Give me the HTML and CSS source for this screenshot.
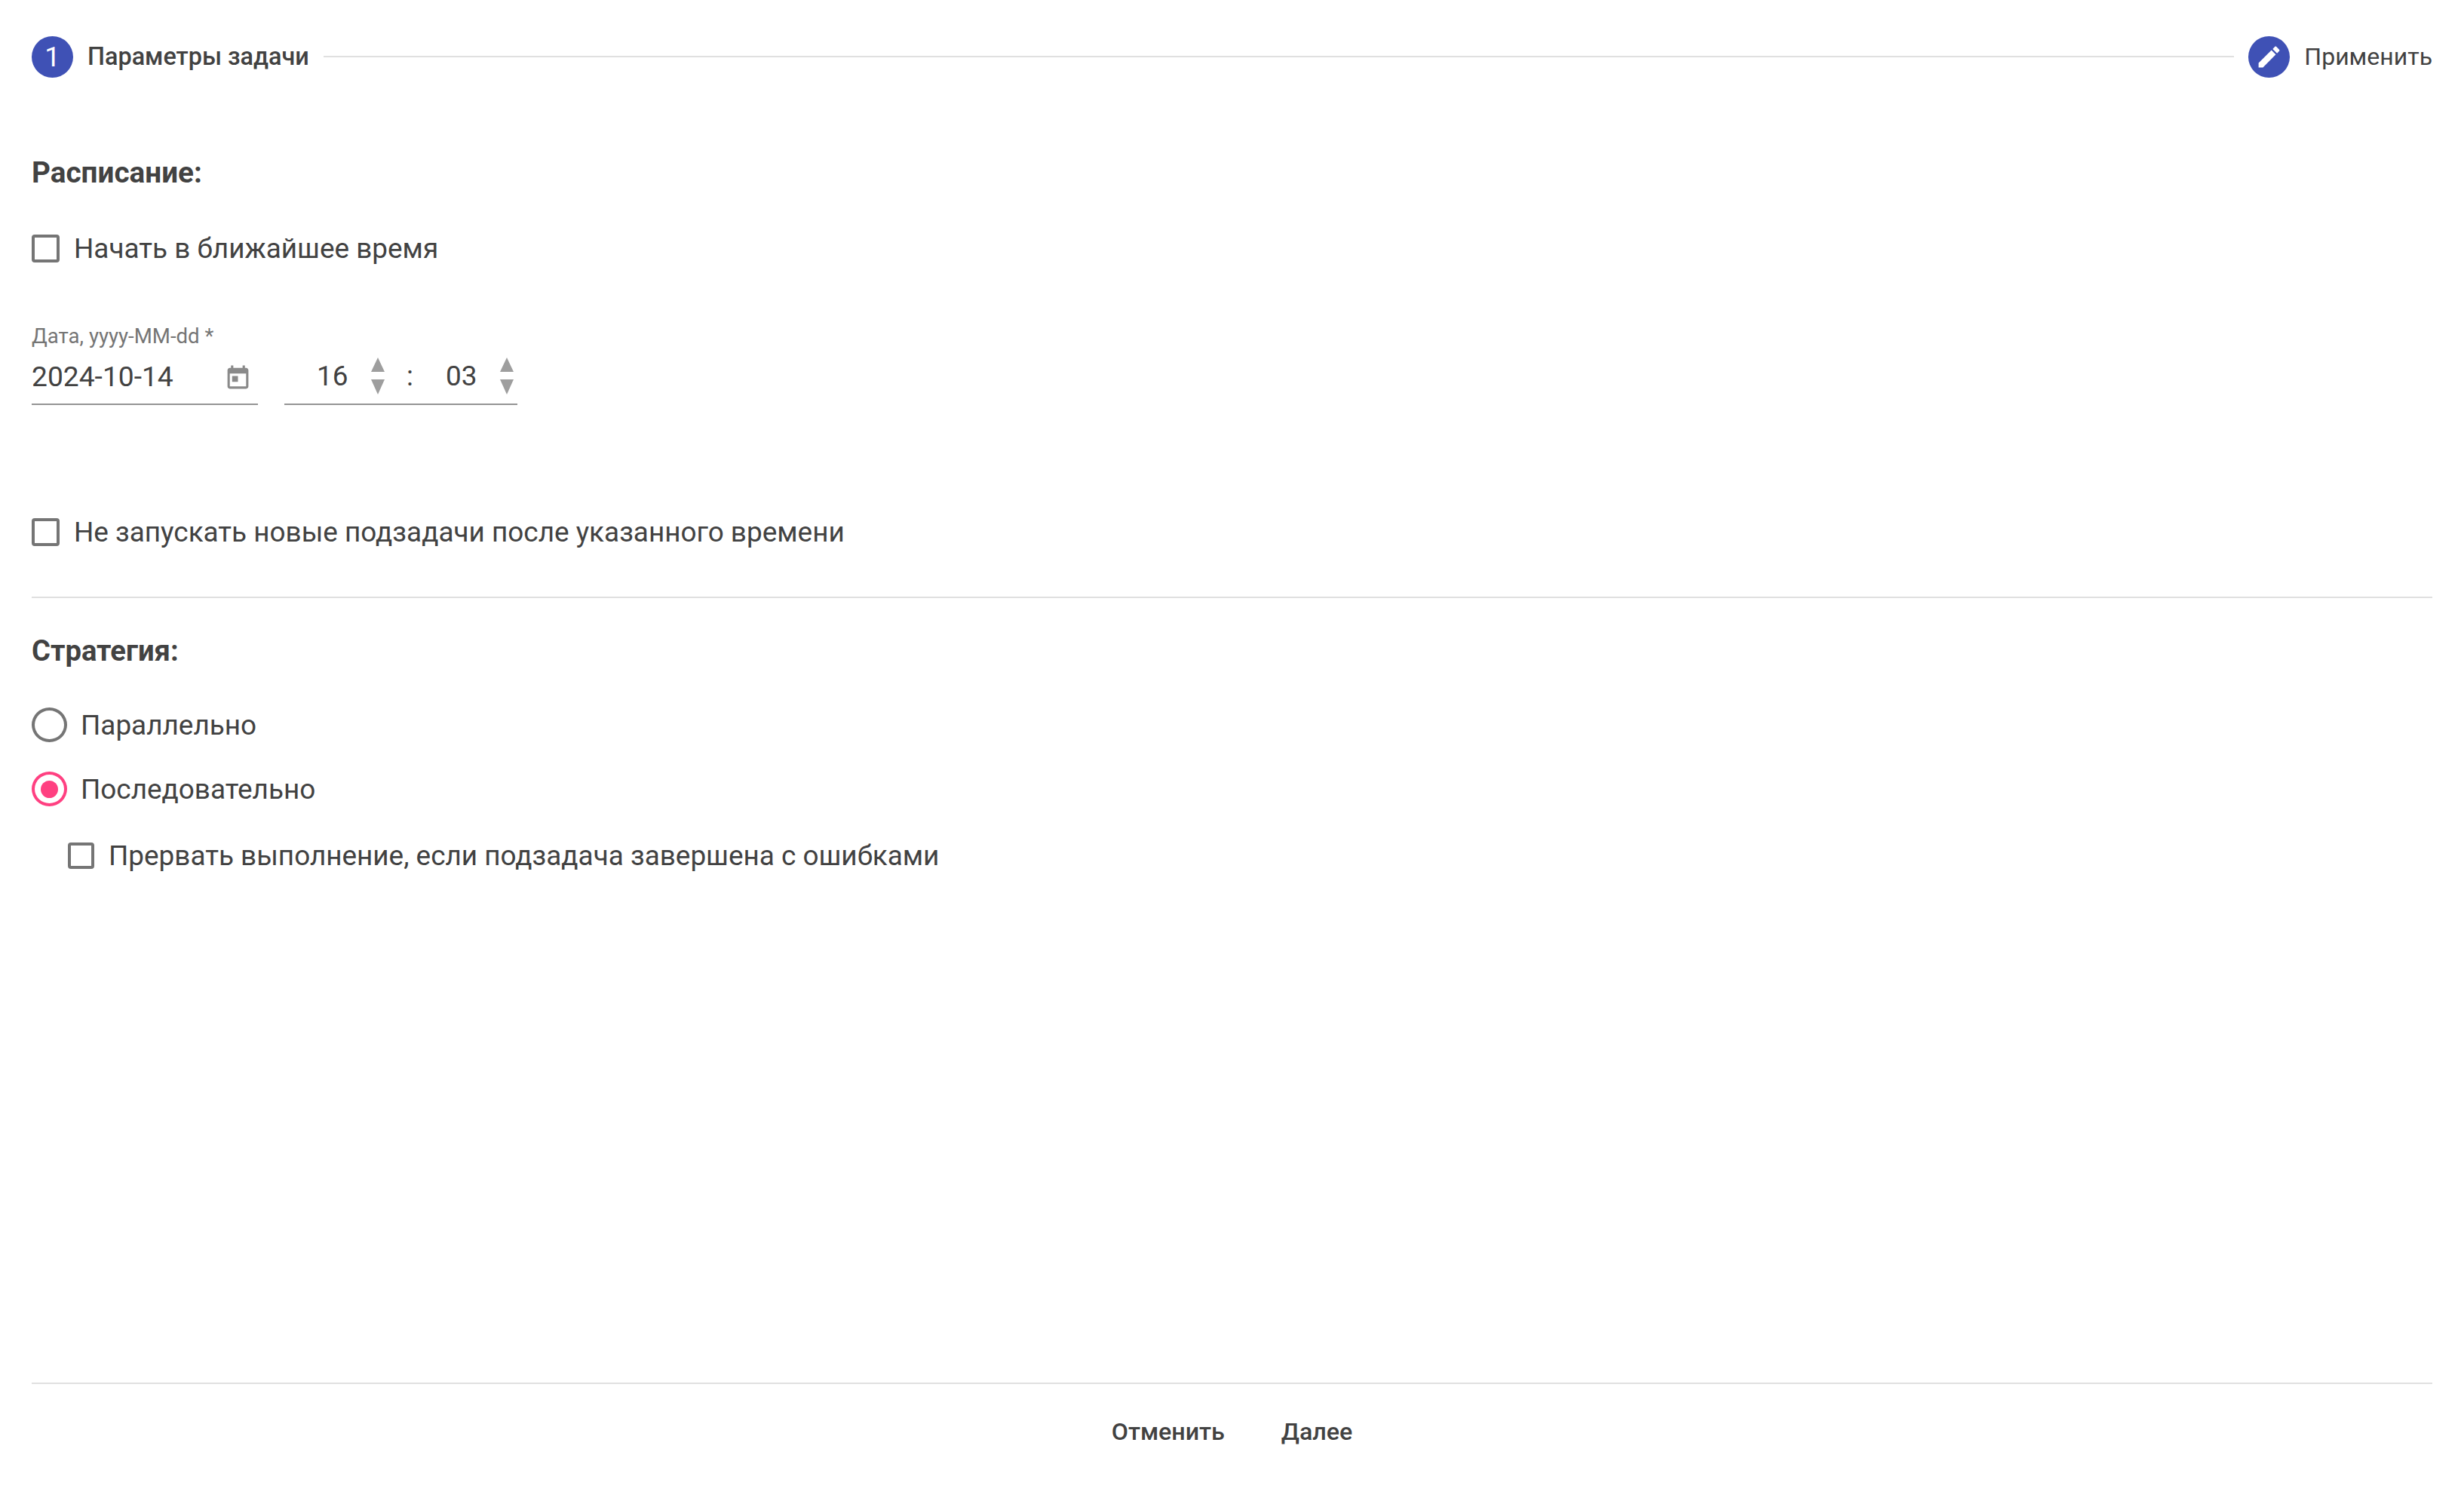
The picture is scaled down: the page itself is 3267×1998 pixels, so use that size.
FILE: index.html
```html
<!DOCTYPE html>
<html lang="ru">
<head>
    <meta charset="UTF-8">
    <title>Параметры задачи</title>
    <link rel="stylesheet" href="styles.css">
</head>
<body>
    <div class="stepper">
        <div class="step">
            <span class="step-icon">1</span>
            <span class="step-label step-active">Параметры задачи</span>
        </div>
        <div class="step-line"></div>
        <div class="step">
            <span class="step-icon">
                <svg class="edit-icon" viewBox="0 0 24 24"><path d="M3 17.25V21h3.75L17.81 9.94l-3.75-3.75L3 17.25zM20.71 7.04c.39-.39.39-1.02 0-1.41l-2.34-2.34c-.39-.39-1.02-.39-1.41 0l-1.83 1.83 3.75 3.75 1.83-1.83z"/></svg>
            </span>
            <span class="step-label step-last">Применить</span>
        </div>
    </div>

    <div class="content">
        <h3 class="section-title">Расписание:</h3>
        <div class="check-row">
            <span class="checkbox"></span>
            <span>Начать в ближайшее время</span>
        </div>

        <div class="date-row">
            <div class="date-field">
                <label class="field-label">Дата, yyyy-MM-dd *</label>
                <div class="field-box date-box">
                    <span>2024-10-14</span>
                    <svg class="today-icon" viewBox="0 0 24 24"><path d="M19 3h-1V1h-2v2H8V1H6v2H5c-1.11 0-1.99.9-1.99 2L3 19c0 1.1.89 2 2 2h14c1.1 0 2-.9 2-2V5c0-1.1-.9-2-2-2zm0 16H5V8h14v11zM7 10h5v5H7z"/></svg>
                </div>
            </div>
            <div class="field-box time-box">
                <span class="time-value">16</span>
                <span class="spinner"><i class="arrow-up"></i><i class="arrow-down"></i></span>
                <span class="time-sep">:</span>
                <span class="time-value">03</span>
                <span class="spinner"><i class="arrow-up"></i><i class="arrow-down"></i></span>
            </div>
        </div>

        <div class="check-row check-deadline">
            <span class="checkbox"></span>
            <span>Не запускать новые подзадачи после указанного времени</span>
        </div>

        <hr class="divider divider-middle">

        <h3 class="section-title title-strategy">Стратегия:</h3>
        <div class="radio-row radio-first">
            <span class="radio"></span>
            <span>Параллельно</span>
        </div>
        <div class="radio-row radio-second">
            <span class="radio radio-checked"></span>
            <span>Последовательно</span>
        </div>
        <div class="check-row check-nested">
            <span class="checkbox checkbox-small"></span>
            <span>Прервать выполнение, если подзадача завершена с ошибками</span>
        </div>
    </div>

    <div class="footer">
        <hr class="divider">
        <div class="actions">
            <button class="btn">Отменить</button>
            <button class="btn">Далее</button>
        </div>
    </div>
</body>
</html>
```

FILE: styles.css
```css
* {
    box-sizing: border-box;
}
html, body {
    height: 100%;
}
body {
    margin: 0;
    padding: 0 42px;
    display: flex;
    flex-direction: column;
    font-family: Roboto, "Noto Sans", sans-serif;
    font-size: 36.9px;
    color: #424242;
    background-color: #fff;
    overflow: hidden;
}

/* stepper */
.stepper {
    display: flex;
    align-items: center;
    padding-top: 48px;
    height: 103px;
}
.step {
    display: flex;
    align-items: center;
    gap: 19px;
}
.step-icon {
    width: 55px;
    height: 55px;
    border-radius: 50%;
    background-color: #3f51b5;
    color: #fff;
    font-size: 36.6px;
    display: flex;
    align-items: center;
    justify-content: center;
}
.edit-icon {
    width: 37px;
    height: 37px;
    fill: #fff;
}
.step-label {
    font-size: 32.4px;
    margin-top: -2px;
}
.step-active {
    font-weight: 500;
}
.step-last {
    font-size: 32px;
}
.step-line {
    flex: 1;
    height: 2px;
    margin: 0 19px 2px;
    background-color: #e0e0e0;
}

/* form */
.content {
    flex: 1;
}
.section-title {
    margin: 0;
    font-size: 38.7px;
    font-weight: 700;
    line-height: 44px;
    padding-top: 104px;
}
.check-row {
    display: flex;
    align-items: center;
    gap: 19px;
    height: 37px;
    margin-top: 60px;
}
.checkbox {
    width: 37px;
    height: 37px;
    border: 4px solid #757575;
    border-radius: 4px;
}
.checkbox-small {
    width: 35px;
    height: 35px;
}
.date-row {
    display: flex;
    align-items: flex-end;
    gap: 35px;
    margin-top: 82px;
}
.date-field {
    width: 300px;
}
.field-label {
    display: block;
    font-size: 27.6px;
    line-height: 32px;
    color: #757575;
}
.field-box {
    display: flex;
    align-items: center;
    height: 75px;
    border-bottom: 2px solid #949494;
}
.date-box {
    justify-content: space-between;
    padding: 0 14px 0 0;
    margin-top: 0;
    font-size: 37.2px;
}
.today-icon {
    width: 37px;
    height: 37px;
    fill: #8a8a8a;
    margin-top: 6px;
    margin-right: -6px;
}
.time-box {
    width: 309px;
}
.time-value {
    width: 38px;
    margin-left: 43px;
}
.time-box .time-value:last-of-type {
    margin-left: 29px;
}
.spinner {
    display: flex;
    flex-direction: column;
    gap: 10px;
    margin-left: 34px;
}
.arrow-up, .arrow-down {
    display: block;
    width: 0;
    height: 0;
    border-left: 9.5px solid transparent;
    border-right: 9.5px solid transparent;
}
.arrow-up {
    border-bottom: 19px solid #9e9e9e;
}
.arrow-down {
    border-top: 20px solid #9e9e9e;
}
.time-sep {
    margin-left: 29px;
}
.check-deadline {
    margin-top: 150px;
}
.divider {
    border: none;
    height: 2px;
    margin: 0;
    background-color: #e0e0e0;
}
.divider-middle {
    margin-top: 67px;
}
.title-strategy {
    padding-top: 48px;
    font-size: 38.2px;
}
.radio-row {
    display: flex;
    align-items: center;
    gap: 18px;
    height: 46px;
}
.radio-first {
    margin-top: 53px;
}
.radio-second {
    margin-top: 39px;
}
.radio {
    width: 47px;
    height: 46px;
    border: 4px solid #757575;
    border-radius: 50%;
}
.radio-checked {
    border-color: #ff4081;
    display: flex;
    align-items: center;
    justify-content: center;
}
.radio-checked::after {
    content: "";
    width: 23px;
    height: 23px;
    border-radius: 50%;
    background-color: #ff4081;
}
.check-nested {
    margin-top: 48px;
    margin-left: 48px;
    height: 35px;
    gap: 19px;
}

/* footer */
.footer {
    height: 165px;
}
.actions {
    display: flex;
    justify-content: center;
    gap: 75px;
    margin-top: 44px;
}
.btn {
    padding: 0;
    border: none;
    background: none;
    font-family: inherit;
    font-size: 32.2px;
    font-weight: 500;
    line-height: 38px;
    color: #424242;
}
```
